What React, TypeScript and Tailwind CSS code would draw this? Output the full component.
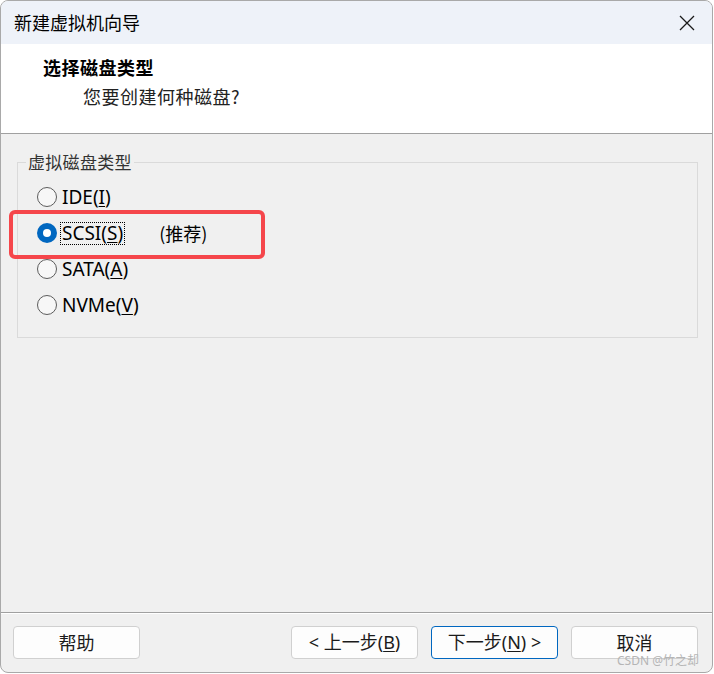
import React from "react";

const FONT = { fontFamily: '"Noto Sans", "Noto Sans CJK SC", sans-serif' };
const CJK = { fontFamily: '"Noto Sans CJK SC", sans-serif' };

function Radio({ checked }: { checked?: boolean }) {
  return checked ? (
    <span className="w-[20px] h-[20px] rounded-full bg-[#0067c0] flex items-center justify-center shrink-0">
      <span className="w-[8px] h-[8px] rounded-full bg-white" />
    </span>
  ) : (
    <span className="w-[20px] h-[20px] rounded-full border border-[#5c5c5c] bg-[#f7f7f7] shrink-0" />
  );
}

function Btn({ children, primary }: { children: React.ReactNode; primary?: boolean }) {
  return (
    <div
      className={
        "w-[127px] h-[33px] rounded-[4px] bg-[#fdfdfd] flex items-center justify-center text-[18px] text-[#1b1b1b] " +
        (primary ? "border border-[#0067c0]" : "border border-[#d0d0d0]")
      }
    >
      {children}
    </div>
  );
}

export default function App() {
  const items = [
    { pre: "IDE(", key: "I", post: ")" },
    { pre: "SCSI(", key: "S", post: ")", checked: true },
    { pre: "SATA(", key: "A", post: ")" },
    { pre: "NVMe(", key: "V", post: ")" },
  ];
  return (
    <div className="w-[714px] h-[674px] bg-white" style={FONT}>
      <div className="relative w-[713px] h-[673px] rounded-[8px] border border-[#a9a9a9] overflow-hidden flex flex-col bg-[#f0f0f0]">
        {/* title bar */}
        <div className="h-[43px] bg-[#eef2f9] flex items-center justify-between pl-[13px] pr-[16px] shrink-0">
          <span className="text-[18px] text-black" style={CJK}>新建虚拟机向导</span>
          <svg width="16" height="16" viewBox="0 0 16 16" className="mr-[1px]">
            <path d="M1 1 L15 15 M15 1 L1 15" stroke="#1a1a1a" strokeWidth="1.3" />
          </svg>
        </div>
        {/* header */}
        <div className="h-[90px] bg-white border-b border-[#a0a0a0] shrink-0 pl-[42px] pt-[10px]" style={CJK}>
          <div className="text-[18px] font-bold text-black leading-[27px] tracking-[0.5px]">选择磁盘类型</div>
          <div className="text-[18px] text-[#222] leading-[27px] mt-[2px] pl-[40px] tracking-[0.5px]">您要创建何种磁盘?</div>
        </div>
        {/* body */}
        <div className="flex-1 px-[16px] pt-[16px]">
          <fieldset className="border border-[#dadada] w-[681px] h-[188px]">
            <legend className="ml-[8px] px-[2px] text-[17px] text-[#333] leading-[24px] tracking-[0.3px]" style={CJK}>
              虚拟磁盘类型
            </legend>
            <div className="flex flex-col pl-[19px] pt-[5px]">
              {items.map((it) => (
                <div key={it.key} className="h-[36px] flex items-center">
                  <Radio checked={it.checked} />
                  <span
                    className={
                      "ml-[4px] px-[1px] text-[19px] text-black leading-[21px] " +
                      (it.checked ? "outline outline-1 outline-dotted outline-black" : "")
                    }
                  >
                    {it.pre}
                    <span className="underline underline-offset-[2px]">{it.key}</span>
                    {it.post}
                  </span>
                  {it.checked && (
                    <span className="ml-[35px] text-[18px] text-black" style={CJK}>(推荐)</span>
                  )}
                </div>
              ))}
            </div>
          </fieldset>
        </div>
        {/* footer */}
        <div className="h-[60px] border-t border-[#a0a0a0] shrink-0 flex items-start pt-[13px] pl-[12px] pr-[14px]" style={{ boxShadow: "inset 0 1px 0 #ffffff" }}>
          <Btn>
            <span style={CJK}>帮助</span>
          </Btn>
          <div className="flex-1" />
          <div className="flex gap-[13px]">
            <Btn>
              &lt; 上一步(<span className="underline underline-offset-[2px]">B</span>)
            </Btn>
            <Btn primary>
              下一步(<span className="underline underline-offset-[2px]">N</span>) &gt;
            </Btn>
            <Btn>
              <span style={CJK}>取消</span>
            </Btn>
          </div>
        </div>
        {/* red annotation box */}
        <div className="absolute left-[8px] top-[209px] w-[256px] h-[49px] border-[4px] border-[#f5464b] rounded-[6px]" />
        {/* watermark */}
        <div className="absolute right-[13px] bottom-[4px] text-[12px] text-[#b5b5b5] leading-[14px]">CSDN @竹之却</div>
      </div>
    </div>
  );
}
